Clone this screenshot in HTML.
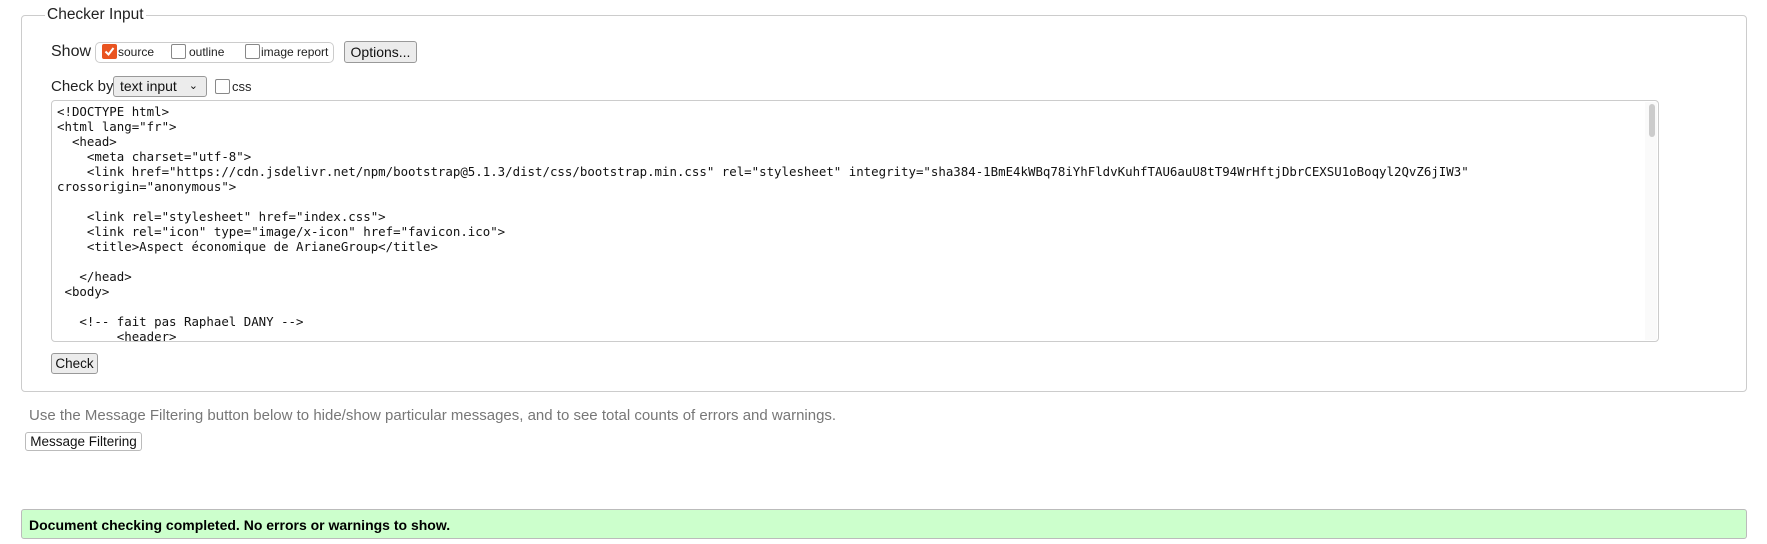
<!DOCTYPE html>
<html><head><meta charset="utf-8"><style>
body{margin:0;width:1767px;height:544px;background:#fff;position:relative;font-family:"Liberation Sans","DejaVu Sans",sans-serif;color:#111;overflow:hidden}
.a{position:absolute}
.fs{left:21px;top:15px;width:1724px;height:375px;border:1px solid #ccc;border-radius:4px}
.leg{left:45px;top:6px;background:#fff;padding:0 2px;font-size:15.5px;color:#222}
.lbl{font-size:15px;color:#222}
.grp{left:95px;top:42px;width:237px;height:19px;border:1px solid #ccc;border-radius:5px}
.cb{width:13px;height:13px;border:1.5px solid #888;border-radius:2px;background:#fff}
.cb.on{background:#e95420;border-color:#e95420}
.sm{font-size:12px;color:#222}
.btn{border:1px solid #999;border-radius:3px;background:#ececec;font-size:14px;color:#111;text-align:center;box-sizing:border-box}
.ta{left:51px;top:100px;width:1608px;height:242px;border:1px solid #ccc;border-radius:4px;box-sizing:border-box;overflow:hidden}
pre{margin:0;position:absolute;left:5px;top:3px;font-family:"DejaVu Sans Mono",monospace;font-size:12.42px;line-height:15px;color:#111}
</style></head><body>
<div class="a fs"></div>
<div class="a leg">Checker Input</div>
<div class="a lbl" style="left:51px;top:43px;font-size:16px">Show</div>
<div class="a grp"></div>
<div class="a cb on" style="left:102px;top:44px"><svg width="13" height="13" style="position:absolute;left:0;top:0"><path d="M2.5 6.5 L5.5 9.5 L10.5 3" stroke="#fff" stroke-width="2" fill="none"/></svg></div>
<div class="a sm" style="left:118px;top:45px">source</div>
<div class="a cb" style="left:171px;top:44px"></div>
<div class="a sm" style="left:189px;top:45px">outline</div>
<div class="a cb" style="left:245px;top:44px"></div>
<div class="a sm" style="left:261px;top:45px">image report</div>
<div class="a btn" style="left:344px;top:41px;width:73px;height:22px;line-height:20px">Options...</div>
<div class="a lbl" style="left:51px;top:78px">Check by</div>
<div class="a btn" style="left:113px;top:76px;width:94px;height:21px;line-height:19px;text-align:left;padding-left:6px">text input<span style="position:absolute;right:8px;top:0;font-size:11px">&#8964;</span></div>
<div class="a cb" style="left:215px;top:79px"></div>
<div class="a sm" style="left:232px;top:79px;font-size:13px">css</div>
<div class="a ta"><pre>&lt;!DOCTYPE html&gt;
&lt;html lang="fr"&gt;
  &lt;head&gt;
    &lt;meta charset="utf-8"&gt;
    &lt;link href="https://cdn.jsdelivr.net/npm/bootstrap@5.1.3/dist/css/bootstrap.min.css" rel="stylesheet" integrity="sha384-1BmE4kWBq78iYhFldvKuhfTAU6auU8tT94WrHftjDbrCEXSU1oBoqyl2QvZ6jIW3"
crossorigin="anonymous"&gt;

    &lt;link rel="stylesheet" href="index.css"&gt;
    &lt;link rel="icon" type="image/x-icon" href="favicon.ico"&gt;
    &lt;title&gt;Aspect économique de ArianeGroup&lt;/title&gt;

   &lt;/head&gt;
 &lt;body&gt;

   &lt;!-- fait pas Raphael DANY --&gt;
        &lt;header&gt;</pre>
<div class="a" style="right:1px;top:1px;width:12px;height:238px;background:#fafafa"></div>
<div class="a" style="right:3px;top:3px;width:6px;height:33px;background:#ccc;border-radius:3px"></div>
</div>
<div class="a btn" style="left:51px;top:353px;width:47px;height:21px;line-height:19px;font-size:13.5px">Check</div>
<div class="a" style="left:29px;top:407px;font-size:15px;color:#777">Use the Message Filtering button below to hide/show particular messages, and to see total counts of errors and warnings.</div>
<div class="a btn" style="left:25px;top:432px;width:117px;height:19px;line-height:17px;font-size:13.5px;background:#fff;border-color:#bbb">Message Filtering</div>
<div class="a" style="left:21px;top:509px;width:1724px;height:28px;background:#ccffcc;border:1px solid #bbb;border-radius:3px"></div>
<div class="a" style="left:29px;top:517px;font-size:14px;font-weight:bold;color:#000">Document checking completed. No errors or warnings to show.</div>
</body></html>
